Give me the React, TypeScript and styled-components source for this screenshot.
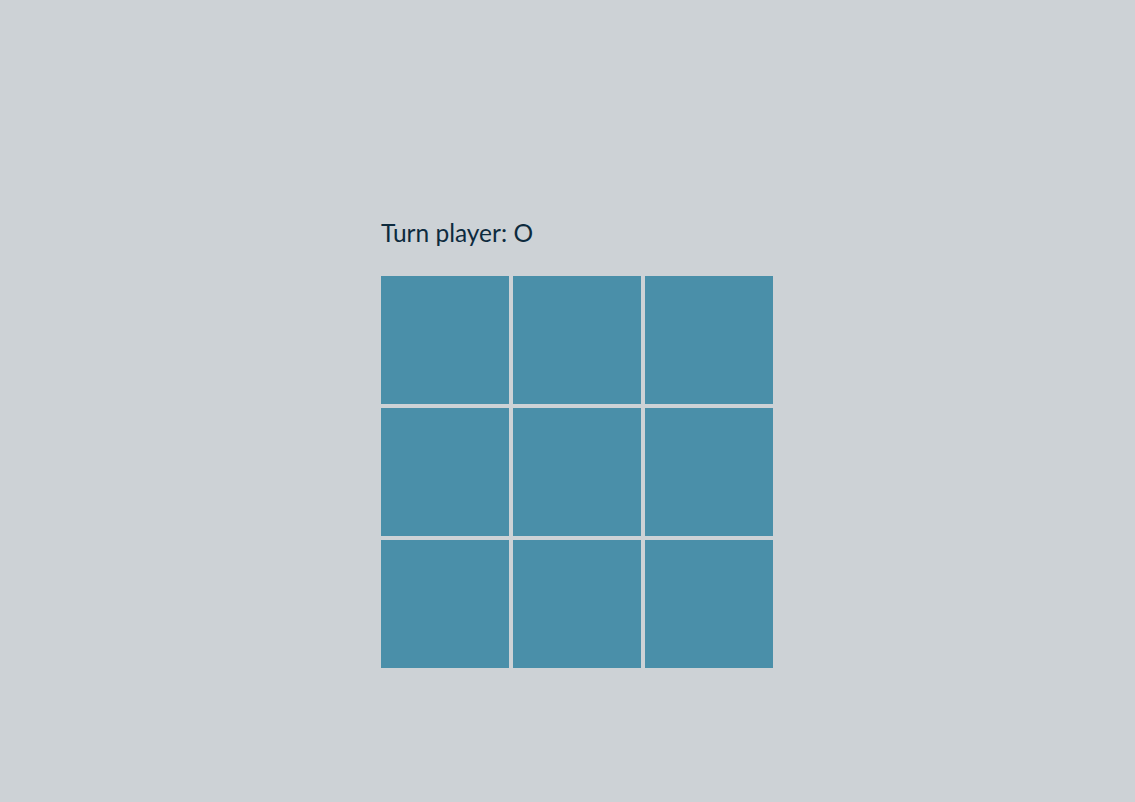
import React, { useState } from "react";
import styled, { createGlobalStyle } from "styled-components";

const Global = createGlobalStyle`
  html, body { margin: 0; padding: 0; background: #cdd2d6; }
  body { font-family: "Lato", "Noto Sans", sans-serif; }
`;

const Page = styled.div`
  min-height: 802px;
  display: flex;
  flex-direction: column;
  align-items: flex-start;
  padding: 217px 0 0 381px;
  box-sizing: border-box;
`;

const Status = styled.h1`
  margin: 0 0 27px 0;
  font-size: 24.5px;
  font-weight: 400;
  line-height: 32px;
  color: #0d2b3e;
`;

const Board = styled.div`
  display: grid;
  grid-template-columns: repeat(3, 128px);
  grid-template-rows: repeat(3, 128px);
  gap: 4px;
`;

const Cell = styled.button`
  border: 0;
  padding: 0;
  margin: 0;
  background: #4a8fa9;
  width: 128px;
  height: 128px;
  cursor: pointer;
  color: #0d2b3e;
  font-size: 64px;
`;

export default function App() {
  const [cells, setCells] = useState<string[]>(Array(9).fill(""));
  const [turn, setTurn] = useState<"O" | "X">("O");
  const play = (i: number) => {
    if (cells[i]) return;
    const next = cells.slice();
    next[i] = turn;
    setCells(next);
    setTurn(turn === "O" ? "X" : "O");
  };
  return (
    <>
      <Global />
      <Page>
        <Status>Turn player: {turn}</Status>
        <Board>
          {cells.map((c, i) => (
            <Cell key={i} onClick={() => play(i)}>
              {c}
            </Cell>
          ))}
        </Board>
      </Page>
    </>
  );
}
